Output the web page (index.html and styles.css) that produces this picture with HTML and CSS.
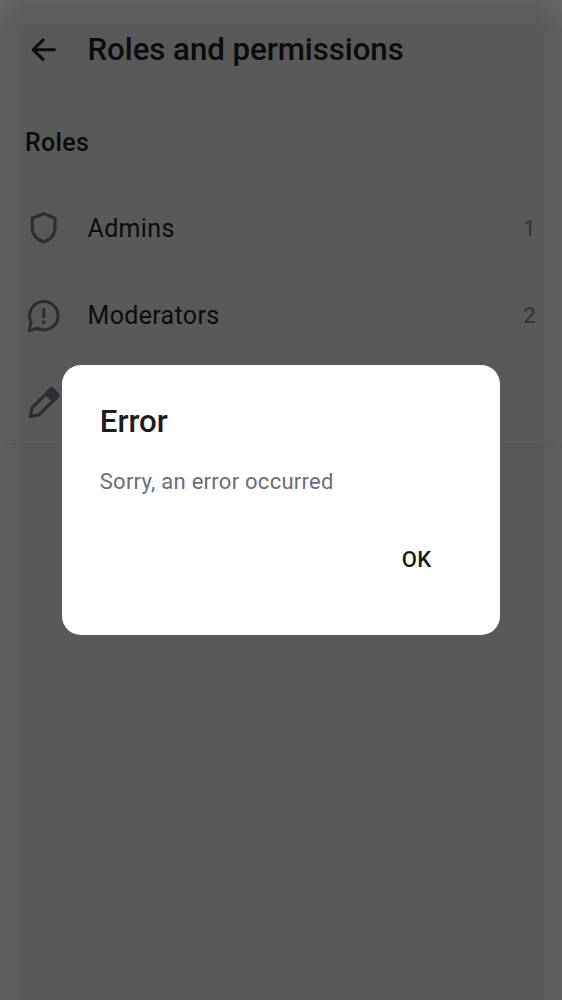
FILE: index.html
```html
<!DOCTYPE html>
<html lang="en">
<head>
<meta charset="utf-8">
<title>Roles and permissions</title>
<link rel="stylesheet" href="styles.css">
</head>
<body>
<main class="screen">
  <header class="topbar">
    <svg class="icon icon-back" viewBox="0 0 24 24"><path d="M18.800 12H5.200M11.500 5.800 5.200 12l6.300 6.200"/></svg>
    <h1 class="title">Roles and permissions</h1>
  </header>
  <h2 class="section-title">Roles</h2>
  <ul class="roles">
    <li class="row">
      <svg class="icon" viewBox="0 0 24 24"><path d="M12 3 19.200 5.900V11.500C19.200 16.300 16.300 19.600 12 21.100 7.700 19.600 4.600 16.300 4.600 11.500V5.900Z"/></svg>
      <span class="label">Admins</span><span class="count">1</span>
    </li>
    <li class="row">
      <svg class="icon" viewBox="0 0 24 24"><path d="M3.900 16.100A9.100 9.100 0 1 1 7.900 20.100L2.600 21.400Z"/><path d="M12 7.900v4.700"/><circle class="dot" cx="12" cy="16" r="1.200"/></svg>
      <span class="label">Moderators</span><span class="count">2</span>
    </li>
    <li class="row">
      <svg class="icon" viewBox="0 0 24 24"><path d="M3.300 20.700 4.500 15.300 16 3.700Q16.900 2.900 17.800 3.700L20.600 6.400Q21.400 7.300 20.600 8.200L8.800 19.800Z"/><path class="solid" d="m13.400 6.300 2.600-2.600Q16.900 2.900 17.800 3.700L20.600 6.400Q21.400 7.300 20.600 8.200l-2.500 2.500Z"/></svg>
    </li>
  </ul>
</main>
<div class="scrim">
  <section class="dialog" role="alertdialog">
    <h2 class="dialog-title">Error</h2>
    <p class="dialog-text">Sorry, an error occurred</p>
    <div class="dialog-actions"><button class="ok">OK</button></div>
  </section>
</div>
</body>
</html>
```
FILE: styles.css
```css
* { box-sizing: border-box; }
body {
  margin: 0;
  height: 1000px;
  overflow: hidden;
  background: #595959;
  font-family: Roboto, sans-serif;
}
h1, h2, p, ul { margin: 0; padding: 0; }
.screen { height: 1000px; }
.topbar {
  display: flex;
  align-items: center;
  gap: 25px;
  height: 100px;
  padding: 0 25px;
}
.icon {
  width: 37.500px;
  height: 37.500px;
  flex: none;
  fill: none;
  stroke: #2b2f34;
  stroke-width: 2;
  stroke-linejoin: round;
  stroke-linecap: round;
}
.icon-back { stroke: #0b0c0d; }
.dot { fill: #2b2f34; stroke: none; }
.solid { fill: #2b2f34; }
.title {
  color: #0b0c0d;
  font-size: 31.250px;
  line-height: 40px;
  font-weight: 500;
  letter-spacing: -0.060px;
}
.section-title {
  height: 84.300px;
  padding: 27px 25px 0;
  color: #0b0c0d;
  font-size: 25px;
  line-height: 32px;
  font-weight: 500;
  letter-spacing: 0.300px;
}
.roles {
  list-style: none;
  border-bottom: 1px solid #535353;
}
.row {
  display: flex;
  align-items: center;
  gap: 25px;
  height: 87.500px;
  padding: 0 26.500px 0 25px;
}
.label {
  flex: 1;
  color: #0b0c0d;
  font-size: 25px;
  line-height: 37px;
  letter-spacing: 0.340px;
}
.count {
  color: #2e3237;
  font-size: 22px;
  line-height: 33px;
}
.scrim {
  position: absolute;
  inset: 0;
  display: grid;
  place-items: center;
  background:
    linear-gradient(to right, #ffffff0a, #fff0 24px),
    linear-gradient(to left, #ffffff0a, #fff0 24px),
    linear-gradient(to bottom, #ffffff0d, #fff0 30px);
}
.dialog {
  width: 437.500px;
  height: 270px;
  padding: 36.500px 37.500px;
  border-radius: 19px;
  background: #fff;
}
.dialog-title {
  color: #1c1b20;
  font-size: 31.250px;
  line-height: 40px;
  font-weight: 500;
}
.dialog-text {
  margin-top: 24px;
  color: #66707a;
  font-size: 22px;
  line-height: 31px;
  letter-spacing: 0.260px;
}
.dialog-actions {
  display: flex;
  justify-content: flex-end;
  margin-top: 32px;
}
.ok {
  height: 62px;
  padding: 0 31px;
  border: 0;
  background: none;
  color: #1c1b20;
  font: 500 22px/32px Roboto, sans-serif;
  letter-spacing: 0.200px;
}
```
